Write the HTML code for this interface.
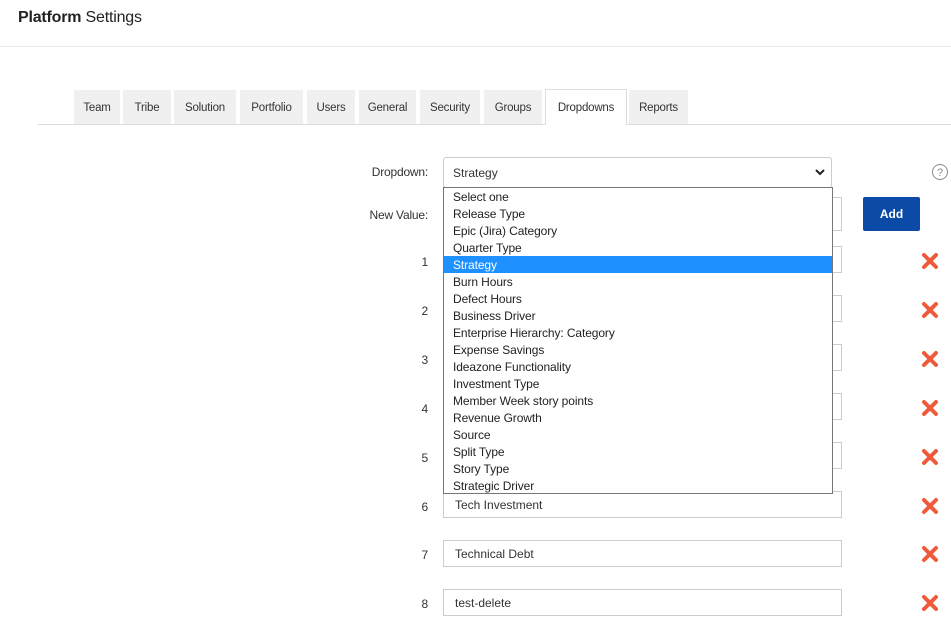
<!DOCTYPE html>
<html><head><style>
body{margin:0;width:951px;height:630px;overflow:hidden;background:#fff;font-family:"Liberation Sans",sans-serif;color:#333;position:relative}
.hdr{position:absolute;left:0;top:0;width:951px;height:46px;border-bottom:1px solid #e8e8e8}
.hdr span{position:absolute;left:18px;top:9px;font-size:16px;color:#222;letter-spacing:-0.2px}
.line{position:absolute;left:38px;right:0;top:124px;border-top:1px solid #ddd}
.tab{position:absolute;top:90px;height:34px;background:#f0f0f0;font-size:11.5px;line-height:37px;text-align:center;color:#333;letter-spacing:-0.2px}
.tab.act{background:#fff;border:1px solid #ddd;border-bottom:none;top:89px;height:36px;box-sizing:border-box;line-height:37px}
.lbl{position:absolute;right:523px;font-size:12px;color:#333;letter-spacing:-0.2px}
.inp{position:absolute;left:443px;width:399px;height:27px;border:1px solid #ccc;box-sizing:border-box;font-size:12px;line-height:27px;padding-left:11px;color:#333}
.x{position:absolute;left:921px;width:18px;height:18px}
.sel{position:absolute;left:443px;top:157px;width:389px;height:31px;border:1px solid #ccc;border-radius:3px;box-sizing:border-box;font-size:12px;line-height:31px;padding-left:9px}
.list{position:absolute;left:443px;top:187px;width:390px;height:307px;border:1px solid #767676;box-sizing:border-box;background:#fff;font-size:12px;letter-spacing:-0.1px}
.list div{height:17px;line-height:18px;padding-left:9px;color:#222}
.list .on{background:#1e90ff;color:#fff}
.btn{position:absolute;left:863px;top:197px;width:57px;height:34px;background:#0b4aa6;border-radius:2px;color:#fff;font-weight:bold;font-size:12px;text-align:center;line-height:35px}
</style></head><body>
<div class="hdr"><span><b>Platform</b> Settings</span></div>
<div class="line"></div>
<div class="tab" style="left:74px;width:46px">Team</div>
<div class="tab" style="left:123px;width:48px">Tribe</div>
<div class="tab" style="left:174px;width:62px">Solution</div>
<div class="tab" style="left:240px;width:63px">Portfolio</div>
<div class="tab" style="left:307px;width:48px">Users</div>
<div class="tab" style="left:359px;width:57px">General</div>
<div class="tab" style="left:420px;width:60px">Security</div>
<div class="tab" style="left:484px;width:58px">Groups</div>
<div class="tab act" style="left:545px;width:82px">Dropdowns</div>
<div class="tab" style="left:629px;width:59px">Reports</div>

<div class="lbl" style="top:165px">Dropdown:</div>
<div class="lbl" style="top:208px">New Value:</div>
<div class="inp" style="top:197px;height:34px"></div>
<div class="btn">Add</div>
<svg style="position:absolute;left:931px;top:163px" width="18" height="18"><circle cx="9" cy="9" r="7.5" fill="none" stroke="#888" stroke-width="1"/><text x="9" y="13" font-size="11" text-anchor="middle" fill="#888" font-family="Liberation Sans">?</text></svg>

<div class="lbl" style="top:255px">1</div><div class="inp" style="top:246px"></div>
<div class="lbl" style="top:304px">2</div><div class="inp" style="top:295px"></div>
<div class="lbl" style="top:353px">3</div><div class="inp" style="top:344px"></div>
<div class="lbl" style="top:402px">4</div><div class="inp" style="top:393px"></div>
<div class="lbl" style="top:451px">5</div><div class="inp" style="top:442px"></div>
<div class="lbl" style="top:500px">6</div><div class="inp" style="top:491px">Tech Investment</div>
<div class="lbl" style="top:548px">7</div><div class="inp" style="top:540px">Technical Debt</div>
<div class="lbl" style="top:597px">8</div><div class="inp" style="top:589px">test-delete</div>

<svg class="x" style="top:252px" viewBox="0 0 18 18"><path d="M3 3L15 15M15 3L3 15" stroke="#f05a3a" stroke-width="4" stroke-linecap="round"/></svg>
<svg class="x" style="top:301px" viewBox="0 0 18 18"><path d="M3 3L15 15M15 3L3 15" stroke="#f05a3a" stroke-width="4" stroke-linecap="round"/></svg>
<svg class="x" style="top:350px" viewBox="0 0 18 18"><path d="M3 3L15 15M15 3L3 15" stroke="#f05a3a" stroke-width="4" stroke-linecap="round"/></svg>
<svg class="x" style="top:399px" viewBox="0 0 18 18"><path d="M3 3L15 15M15 3L3 15" stroke="#f05a3a" stroke-width="4" stroke-linecap="round"/></svg>
<svg class="x" style="top:448px" viewBox="0 0 18 18"><path d="M3 3L15 15M15 3L3 15" stroke="#f05a3a" stroke-width="4" stroke-linecap="round"/></svg>
<svg class="x" style="top:497px" viewBox="0 0 18 18"><path d="M3 3L15 15M15 3L3 15" stroke="#f05a3a" stroke-width="4" stroke-linecap="round"/></svg>
<svg class="x" style="top:545px" viewBox="0 0 18 18"><path d="M3 3L15 15M15 3L3 15" stroke="#f05a3a" stroke-width="4" stroke-linecap="round"/></svg>
<svg class="x" style="top:594px" viewBox="0 0 18 18"><path d="M3 3L15 15M15 3L3 15" stroke="#f05a3a" stroke-width="4" stroke-linecap="round"/></svg>

<div class="sel">Strategy<svg style="position:absolute;right:6px;top:11px" width="10" height="8"><path d="M1 1L5 5L9 1" stroke="#222" stroke-width="2" fill="none"/></svg></div>
<div class="list">
<div>Select one</div><div>Release Type</div><div>Epic (Jira) Category</div><div>Quarter Type</div><div class="on">Strategy</div><div>Burn Hours</div><div>Defect Hours</div><div>Business Driver</div><div>Enterprise Hierarchy: Category</div><div>Expense Savings</div><div>Ideazone Functionality</div><div>Investment Type</div><div>Member Week story points</div><div>Revenue Growth</div><div>Source</div><div>Split Type</div><div>Story Type</div><div>Strategic Driver</div>
</div>
</body></html>
